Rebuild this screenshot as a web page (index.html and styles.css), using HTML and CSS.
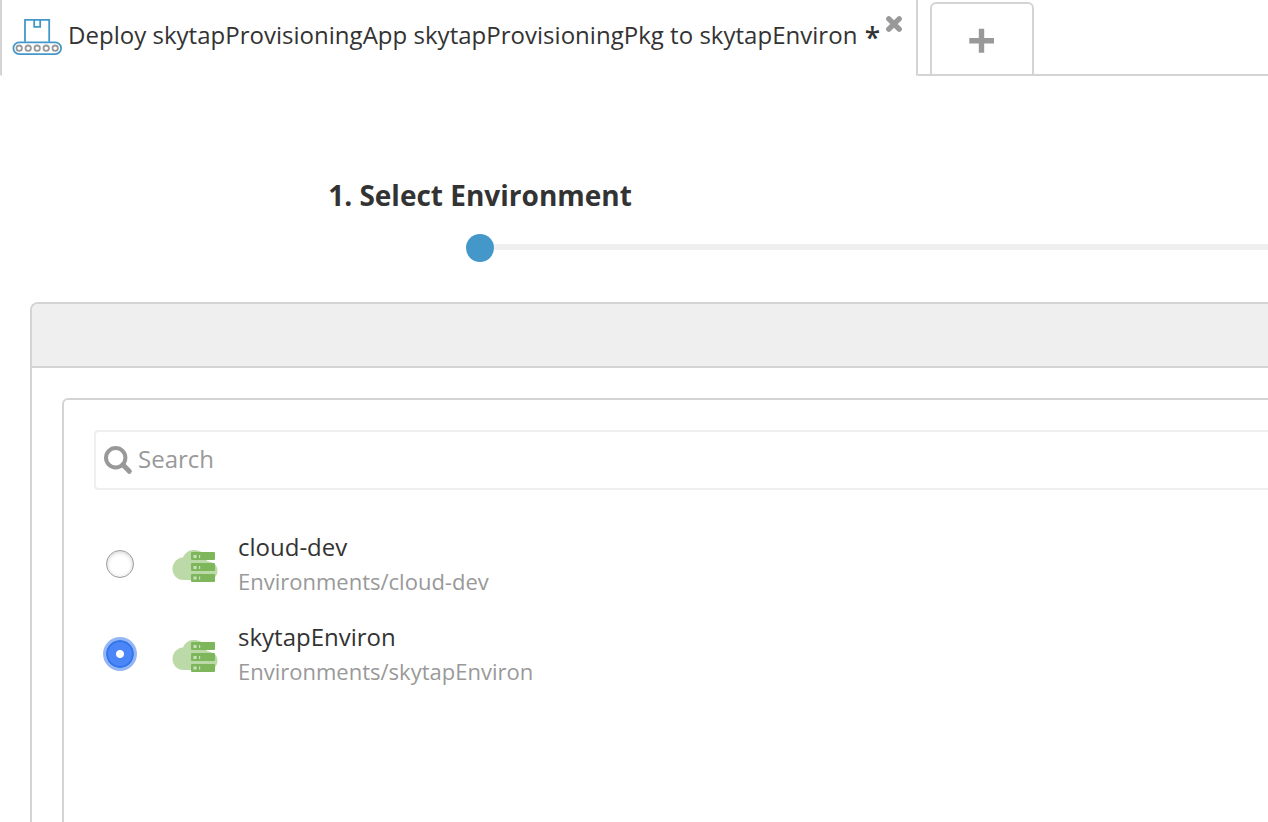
FILE: index.html
```html
<!DOCTYPE html>
<html lang="en">
<head>
<meta charset="utf-8">
<title>Deploy</title>
<link rel="stylesheet" href="styles.css">
</head>
<body>
<svg class="defs" width="0" height="0" aria-hidden="true">
  <symbol id="env" viewBox="0 0 46 34">
    <path d="M11.500 31C5 31 .5 26 .5 20 .5 14 5 8.800 11 8.500 13 3.500 17 1 22 1c5 0 9 2 11 6l2 5c6 1 10.500 4 10.500 9.500C45.500 27.500 41 31 36 31z" fill="#bcdaa8"/>
    <g fill="#7db65b"><rect x="19" y="3" width="24" height="8" rx="1"/><rect x="19" y="14" width="24" height="8" rx="1"/><rect x="19" y="25" width="24" height="8" rx="1"/></g>
    <g fill="#cbe2bd"><rect x="21.500" y="6" width="3" height="3"/><rect x="27" y="6" width="1.200" height="3"/><rect x="21.500" y="17" width="3" height="3"/><rect x="27" y="17" width="1.200" height="3"/><rect x="21.500" y="27.500" width="3" height="3"/><rect x="27" y="27.500" width="1.200" height="3"/></g>
  </symbol>
</svg>
<nav class="tabs">
  <div class="tab">
    <svg class="belt" width="50" height="38" viewBox="0 0 50 38" fill="none" stroke="#4398c9" stroke-width="1.800">
      <path d="M13 23.800V1.900h24.200V23.800M22.200 1.900v7h6v-7"/>
      <rect x="1.400" y="24.300" width="47.700" height="11.800" rx="5.900"/>
      <g stroke="#999" stroke-width="1.800"><circle cx="7.200" cy="30.200" r="2.700"/><circle cx="16.200" cy="30.200" r="2.700"/><circle cx="25.200" cy="30.200" r="2.700"/><circle cx="34.200" cy="30.200" r="2.700"/><circle cx="43.200" cy="30.200" r="2.700"/></g>
    </svg>
    <span class="tab-title">Deploy skytapProvisioningApp skytapProvisioningPkg to skytapEnviron <span class="dirty">*</span></span>
    <svg class="close" width="18" height="18" viewBox="0 0 18 18"><path d="M3.800 3.800l10.400 10.400M14.200 3.800L3.800 14.200" stroke="#999" stroke-width="5.400" stroke-linecap="round"/></svg>
  </div>
  <div class="gap"></div>
  <div class="new-tab">
    <svg width="26" height="26" viewBox="0 0 26 26"><path d="M.3 12.800h24.700M12.500 .8v24" stroke="#999" stroke-width="5.400"/></svg>
  </div>
  <div class="rest"></div>
</nav>
<section class="step">
  <h1>1. Select Environment</h1>
  <div class="track"><span class="dot"></span><span class="line"></span></div>
</section>
<main class="panel">
  <header class="panel-head"></header>
  <div class="box">
    <div class="search">
      <svg width="30" height="30" viewBox="0 0 30 30" fill="none" stroke="#999"><circle cx="12.700" cy="12.700" r="9.700" stroke-width="4"/><path d="M19.800 19.800l6.500 6.500" stroke-width="5" stroke-linecap="round"/></svg>
      <span>Search</span>
    </div>
    <div class="row">
      <span class="radio"></span>
      <svg class="env" width="46" height="34"><use href="#env"/></svg>
      <div class="info"><div class="name">cloud-dev</div><div class="path">Environments/cloud-dev</div></div>
    </div>
    <div class="row">
      <span class="radio on"></span>
      <svg class="env" width="46" height="34"><use href="#env"/></svg>
      <div class="info"><div class="name">skytapEnviron</div><div class="path">Environments/skytapEnviron</div></div>
    </div>
  </div>
</main>
</body>
</html>
```
FILE: styles.css
```css
* { box-sizing: border-box; }
body { margin: 0; height: 822px; overflow: hidden; display: flex; flex-direction: column; background: #fff; color: #333; font-family: "Open Sans", "Noto Sans", sans-serif; }
.defs { display: none; }
.tabs { display: flex; height: 76px; flex: none; }
.tab { display: flex; align-items: flex-start; width: 918px; height: 76px; flex: none; border: solid #d4d4d4; border-width: 0 2px 0 2px; border-radius: 0 0 2px 2px; padding-left: 10px; }
.belt { margin-top: 18px; flex: none; }
.tab-title { margin: 18px 0 0 6px; width: 812px; flex: none; font-size: 24px; line-height: 34px; letter-spacing: 0.02px; white-space: nowrap; }
.dirty { margin-left: 1px; font-size: 28px; font-weight: 600; line-height: 1; vertical-align: -4px; }
.close { margin: 15px 0 0 5px; flex: none; }
.gap { width: 12px; border-bottom: 2px solid #d4d4d4; }
.new-tab { display: flex; justify-content: center; width: 104px; height: 74px; margin-top: 2px; padding-top: 24px; border: 2px solid #d4d4d4; border-radius: 6px 6px 0 0; }
.rest { flex: 1; border-bottom: 2px solid #d4d4d4; }
.step { height: 226px; flex: none; padding-top: 99px; }
h1 { width: 320px; margin: 0 0 0 320px; text-align: center; font-size: 28px; line-height: 40px; font-weight: 700; white-space: nowrap; }
.track { display: flex; align-items: center; margin: 19px 0 0 466px; }
.dot { width: 28px; height: 28px; border-radius: 50%; background: #4398c9; }
.line { flex: 1; height: 6px; margin-bottom: 2px; background: #efefef; }
.panel { flex: 1; min-height: 0; margin-left: 30px; border: solid #d4d4d4; border-width: 2px 0 0 2px; border-radius: 8px 0 0 0; overflow: hidden; }
.panel-head { height: 64px; background: #efefef; border-bottom: 2px solid #d4d4d4; }
.box { height: 500px; margin: 30px 0 0 30px; padding: 30px 0 0 30px; border: solid #d4d4d4; border-width: 2px 0 0 2px; border-radius: 6px 0 0 0; }
.search { display: flex; align-items: center; height: 60px; margin-bottom: 38px; padding-left: 7px; border: 2px solid #efefef; border-right: 0; border-radius: 4px 0 0 4px; color: #999; font-size: 24px; line-height: 34px; }
.search span { margin: 0 0 2px 5px; }
.row { display: flex; height: 90px; padding-left: 12px; }
.radio { width: 28px; height: 28px; margin-top: 22px; border: 1px solid #9c9c9c; border-radius: 50%; background: #fff; box-shadow: inset 0 1px 4px #ccc; }
.radio.on { border: 2px solid #3575eb; background: radial-gradient(circle, #fff 0 3.500px, #4b86f8 4.500px); box-shadow: 0 0 0 3px #95b6f4; }
.env { margin: 21px 0 0 38px; }
.info { margin-left: 20px; white-space: nowrap; }
.name { font-size: 24px; line-height: 34px; margin-top: 2px; }
.path { font-size: 22px; line-height: 34px; color: #999; }
```
